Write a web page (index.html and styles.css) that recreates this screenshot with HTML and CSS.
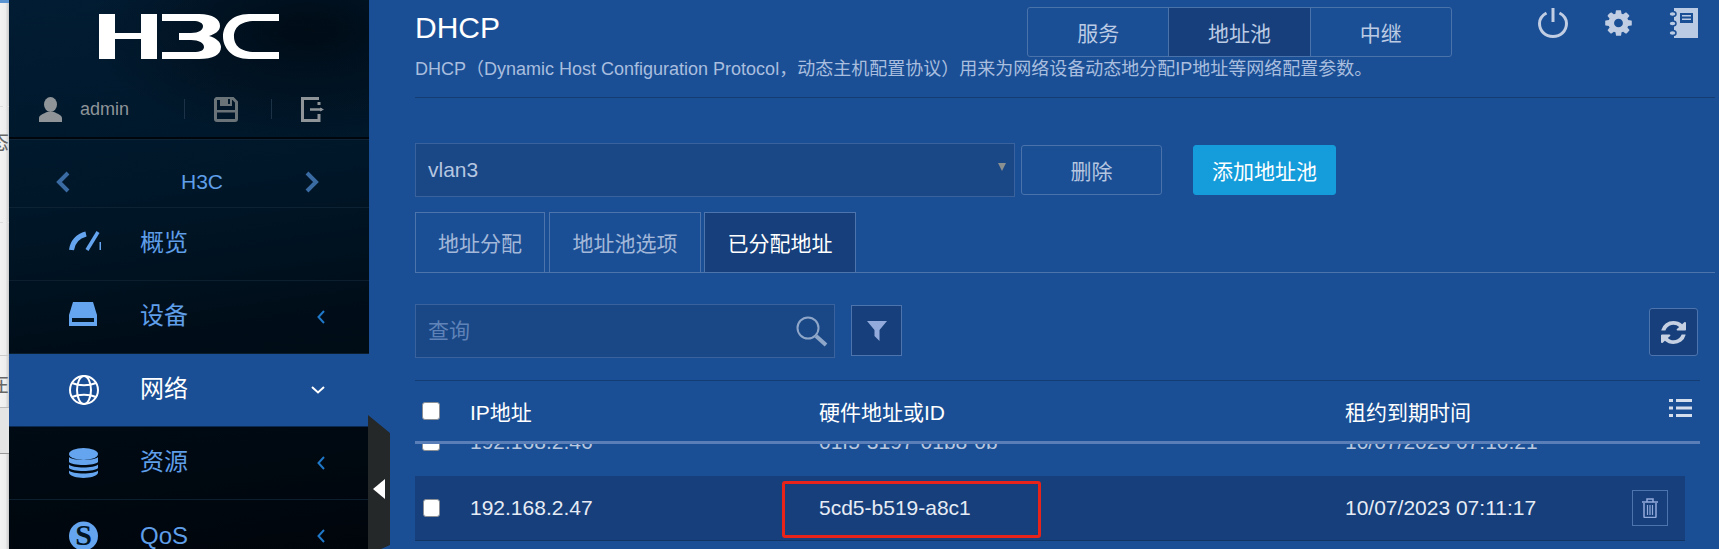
FILE: index.html
```html
<!DOCTYPE html>
<html lang="zh-CN">
<head>
<meta charset="UTF-8">
<meta name="viewport" content="width=device-width, initial-scale=1.0">
<title>DHCP</title>
<link rel="stylesheet" href="styles.css">
</head>
<body>
    <!-- sliver of the window behind -->
    <div class="edge">
        <div class="edge-row edge-a"></div>
        <div class="edge-row edge-b"></div>
        <div class="edge-row edge-c"><span>态</span></div>
        <div class="edge-row edge-d"></div>
        <div class="edge-row edge-e"><span>在</span></div>
        <div class="edge-row edge-f"></div>
        <div class="edge-row edge-g"></div>
    </div>

    <aside class="sidebar">
        <div class="logo">
            <svg width="180" height="45" viewBox="0 0 180 45" fill="#fff" role="img" aria-label="H3C">
                <path d="M0 0H16V19H42V0H58V45H42V25H16V45H0Z"/>
                <path d="M63 0H100C114 0 121 5 121 12C121 17 116 20 110 22C117 24 122 28 122 33C122 41 114 45 100 45H63V38H94C102 38 105 36 105 33C105 29 100 26 92 26H80V19H92C100 19 104 16 104 12C104 9 100 7 94 7H63Z"/>
                <path d="M180 0V7H156C141 7 135 14 135 22.500C135 31 141 38 156 38H180V45H150C132 45 124 33 124 22.500C124 12 132 0 150 0Z"/>
            </svg>
        </div>
        <div class="user-bar">
            <svg class="user-icon" width="23" height="25" viewBox="0 0 23 25" fill="#8e9498">
                <ellipse cx="11.5" cy="7.5" rx="6.5" ry="7.5"/>
                <path d="M0 25V21C0 18 5 16.500 8 15H15C18 16.500 23 18 23 21V25Z"/>
            </svg>
            <span class="user-name">admin</span>
            <span class="user-sep sep-a"></span>
            <svg class="save-icon" width="24" height="25" viewBox="0 0 24 25">
                <path d="M2.500 1.500H19L22.500 5V22C22.500 23 22 23.500 21 23.500H3C2 23.500 1.500 23 1.500 22V2.500Z" fill="none" stroke="#6a7378" stroke-width="3"/>
                <rect x="6" y="1" width="12" height="8" fill="#6a7378"/>
                <rect x="14" y="2" width="2" height="5" fill="#03192c"/>
                <rect x="2" y="13" width="20" height="2.500" fill="#6a7378"/>
            </svg>
            <span class="user-sep sep-b"></span>
            <svg class="exit-icon" width="24" height="25" viewBox="0 0 24 25" fill="none" stroke="#8e9498" stroke-width="3">
                <path d="M18 1.500H1.500V23.500H18V17"/>
                <path d="M18 8V5"/>
                <path d="M9 12.500H21" stroke-width="2.500"/>
                <path d="M19 10.500L23 12.500L19 14.500Z" fill="#8e9498" stroke="none"/>
            </svg>
        </div>
        <div class="device-bar">
            <svg width="14" height="22" viewBox="0 0 14 22" fill="none" stroke="#3a6ba3" stroke-width="4"><path d="M12 2L3 11L12 20"/></svg>
            <span>H3C</span>
            <svg width="14" height="22" viewBox="0 0 14 22" fill="none" stroke="#3a6ba3" stroke-width="4"><path d="M2 2L11 11L2 20"/></svg>
        </div>
        <nav>
            <a class="nav-row">
                <svg class="nav-icon icon-up" width="32" height="22" viewBox="0 0 32 22" fill="none" stroke="#65a5f0">
                    <path d="M2.500 20C3.500 12 9 6 17 4" stroke-width="5"/>
                    <path d="M18 20L29 2" stroke-width="3.500"/>
                    <path d="M31.500 12V20" stroke-width="2"/>
                </svg>
                <span class="nav-text">概览</span>
            </a>
            <a class="nav-row">
                <svg class="nav-icon icon-up" width="28" height="24" viewBox="0 0 28 24">
                    <path d="M4 0H24L28 13V24H0V13Z" fill="#65a5f0"/>
                    <rect x="3" y="16" width="22" height="4" fill="#021524"/>
                </svg>
                <span class="nav-text">设备</span>
                <svg class="chev" width="8" height="14" viewBox="0 0 8 14" fill="none" stroke="#1f78c8" stroke-width="2"><path d="M7 1L1.500 7L7 13"/></svg>
            </a>
            <a class="nav-row active">
                <svg class="nav-icon" width="30" height="30" viewBox="0 0 30 30" fill="none" stroke="#fff" stroke-width="2">
                    <circle cx="15" cy="15" r="14"/>
                    <ellipse cx="15" cy="15" rx="7" ry="14"/>
                    <path d="M3 8C10 11 20 11 27 8M3 22C10 19 20 19 27 22"/>
                </svg>
                <span class="nav-text">网络</span>
                <svg class="chev" width="14" height="8" viewBox="0 0 14 8" fill="none" stroke="#fff" stroke-width="2"><path d="M1 1L7 6.500L13 1"/></svg>
            </a>
            <a class="nav-row">
                <svg class="nav-icon" width="29" height="30" viewBox="0 0 29 30" fill="#65a5f0">
                    <ellipse cx="14.500" cy="6" rx="14.500" ry="6"/>
                    <path d="M0 9C3 13 26 13 29 9V14C26 18 3 18 0 14Z"/>
                    <path d="M0 16.500C3 20.500 26 20.500 29 16.500V20C26 24 3 24 0 20Z"/>
                    <path d="M0 22.500C3 26.500 26 26.500 29 22.500V25C26 31.500 3 31.500 0 25Z"/>
                </svg>
                <span class="nav-text">资源</span>
                <svg class="chev" width="8" height="14" viewBox="0 0 8 14" fill="none" stroke="#1f78c8" stroke-width="2"><path d="M7 1L1.500 7L7 13"/></svg>
            </a>
            <a class="nav-row">
                <svg class="nav-icon" width="29" height="30" viewBox="0 0 29 30">
                    <circle cx="14.500" cy="15" r="14.500" fill="#65a5f0"/>
                    <text x="14.500" y="24" text-anchor="middle" class="qos-letter">S</text>
                </svg>
                <span class="nav-text nav-latin">QoS</span>
                <svg class="chev" width="8" height="14" viewBox="0 0 8 14" fill="none" stroke="#1f78c8" stroke-width="2"><path d="M7 1L1.500 7L7 13"/></svg>
            </a>
        </nav>
    </aside>

    <div class="collapse-tab"><span class="collapse-arrow"></span></div>

    <main class="main">
        <div class="head-row">
            <h1 class="title">DHCP</h1>
            <div class="segments">
                <a class="segment">服务</a>
                <a class="segment on">地址池</a>
                <a class="segment">中继</a>
            </div>
            <div class="top-icons">
                <svg width="30" height="30" viewBox="0 0 30 30" fill="none" stroke="#c0cde2" stroke-width="3">
                    <path d="M8.500 5C4 7.500 1.500 11 1.500 15.500C1.500 23 7.500 28.500 15 28.500C22.500 28.500 28.500 23 28.500 15.500C28.500 11 26 7.500 21.500 5"/>
                    <path d="M15 0V14"/>
                </svg>
                <svg width="31" height="30" viewBox="0 0 1792 1792" preserveAspectRatio="none" fill="#c0cde2">
                    <path d="M1152 896q0-106-75-181t-181-75-181 75-75 181 75 181 181 75 181-75 75-181zm512-109v222q0 12-8 23t-20 13l-185 28q-19 54-39 91 35 50 107 138 10 12 10 25t-9 23q-27 37-99 108t-94 71q-12 0-26-9l-138-108q-44 23-91 38-16 136-29 186-7 28-36 28h-222q-14 0-24.500-8.500t-11.500-21.500l-28-184q-49-16-90-37l-141 107q-10 9-25 9-14 0-25-11-126-114-165-168-7-10-7-23 0-12 8-23 15-21 51-66.500t54-70.500q-27-50-41-99l-183-27q-13-2-21-12.500t-8-23.500v-222q0-12 8-23t19-13l186-28q14-46 39-92-40-57-107-138-10-12-10-24 0-10 9-23 26-36 98.500-107.500t94.500-71.500q13 0 26 10l138 107q44-23 91-38 16-136 29-186 7-28 36-28h222q14 0 24.500 8.500t11.500 21.500l28 184q49 16 90 37l142-107q9-9 24-9 13 0 25 10 129 119 165 170 7 8 7 22 0 12-8 23-15 21-51 66.500t-54 70.500q26 50 41 98l183 28q13 2 21 12.500t8 23.500z"/>
                </svg>
                <svg width="29" height="30" viewBox="0 0 29 30">
                    <rect x="5" y="0" width="24" height="30" fill="#bccbe4"/>
                    <rect x="11" y="5" width="13" height="10" fill="#1b4f95"/>
                    <rect x="13" y="7" width="9" height="1.500" fill="#bccbe4"/>
                    <rect x="13" y="10.500" width="9" height="1.500" fill="#bccbe4"/>
                    <g fill="#bccbe4" stroke="#1b4f95" stroke-width="1.500">
                        <ellipse cx="3.500" cy="6" rx="3.500" ry="2.500"/>
                        <ellipse cx="3.500" cy="15.500" rx="3.500" ry="2.500"/>
                        <ellipse cx="3.500" cy="25" rx="3.500" ry="2.500"/>
                    </g>
                </svg>
            </div>
        </div>
        <p class="desc">DHCP（Dynamic Host Configuration Protocol，动态主机配置协议）用来为网络设备动态地分配IP地址等网络配置参数。</p>

        <div class="pool-row">
            <div class="select">vlan3<span class="select-arrow"></span></div>
            <button type="button" class="btn">删除</button>
            <button type="button" class="btn btn-add">添加地址池</button>
        </div>

        <div class="tabs">
            <a class="tab tab-a">地址分配</a>
            <a class="tab tab-b">地址池选项</a>
            <a class="tab tab-c on">已分配地址</a>
        </div>

        <div class="toolbar">
            <div class="search">
                <span class="search-text">查询</span>
                <svg width="32" height="31" viewBox="0 0 32 31" fill="none" stroke="#8ea6c8">
                    <circle cx="12" cy="12" r="10.500" stroke-width="2"/>
                    <path d="M20 20L30 29" stroke-width="4"/>
                </svg>
            </div>
            <button type="button" class="tool-btn filter-btn">
                <svg width="20" height="20" viewBox="0 0 20 20" fill="#93abdc"><path d="M0 0H20L12.500 9V20L7.500 15V9Z"/></svg>
            </button>
            <button type="button" class="tool-btn refresh-btn">
                <svg width="25" height="23" viewBox="0 0 1536 1536" preserveAspectRatio="none" fill="#c5d0e2">
                    <path d="M1511 928q0 5-1 7-64 268-268 434.500t-478 166.500q-146 0-282.500-55t-243.500-157l-129 129q-19 19-45 19t-45-19-19-45v-448q0-26 19-45t45-19h448q26 0 45 19t19 45-19 45l-137 137q71 66 161 102t187 36q134 0 250-65t186-179q11-17 53-117 8-23 30-23h192q13 0 22.500 9.500t9.500 22.500zm25-800v448q0 26-19 45t-45 19h-448q-26 0-45-19t-19-45 19-45l138-138q-148-137-349-137-134 0-250 65t-186 179q-11 17-53 117-8 23-30 23h-199q-13 0-22.500-9.500t-9.500-22.500v-7q65-268 270-434.500t480-166.500q146 0 284 55.500t245 156.500l130-129q19-19 45-19t45 19 19 45z"/>
                </svg>
            </button>
        </div>

        <div class="table-head">
            <div class="cell-check"><input type="checkbox" class="check check-head"></div>
            <div class="cell-ip">IP地址</div>
            <div class="cell-hw">硬件地址或ID</div>
            <div class="cell-time">租约到期时间</div>
            <svg class="list-icon" width="23" height="18" viewBox="0 0 23 18" fill="#d5deec">
                <rect x="0" y="0" width="4" height="3"/><rect x="7" y="0" width="16" height="3"/>
                <rect x="0" y="7.500" width="4" height="3"/><rect x="7" y="7.500" width="16" height="3"/>
                <rect x="0" y="15" width="4" height="3"/><rect x="7" y="15" width="16" height="3"/>
            </svg>
        </div>

        <div class="table-body">
            <div class="row row-scrolled">
                <div class="cell-check"><input type="checkbox" class="check"></div>
                <div class="cell-ip">192.168.2.46</div>
                <div class="cell-hw">01f5-3197-01b8-0b</div>
                <div class="cell-time">10/07/2023 07:10:21</div>
            </div>
            <div class="row row-selected">
                <div class="cell-check"><input type="checkbox" class="check"></div>
                <div class="cell-ip">192.168.2.47</div>
                <div class="cell-hw">5cd5-b519-a8c1</div>
                <div class="cell-time">10/07/2023 07:11:17</div>
                <button type="button" class="trash-btn">
                    <svg width="16" height="20" viewBox="0 0 16 20" fill="none" stroke="#93abdc">
                        <path d="M0 4H16M5 3.500V1H11V3.500" stroke-width="1.500"/>
                        <path d="M2 5V18.500C2 19 2.500 19.500 3 19.500H13C13.500 19.500 14 19 14 18.500V5" stroke-width="1.500"/>
                        <path d="M5.500 7V17M8 7V17M10.500 7V17" stroke-width="1.200"/>
                    </svg>
                </button>
                <span class="mark"></span>
            </div>
        </div>
    </main>
</body>
</html>
```

FILE: styles.css
```css
* {
    box-sizing: border-box;
}
html, body {
    height: 549px;
    overflow: hidden;
}
body {
    margin: 0;
    display: flex;
    position: relative;
    background-color: #1b4f95;
    font-family: "Liberation Sans", "Noto Sans CJK SC", sans-serif;
    font-size: 21px;
    color: #fff;
}

/* window behind */
.edge {
    width: 9px;
    flex: none;
    overflow: hidden;
    background: linear-gradient(90deg, #f2f2f2, #eeeeee 60%, #c9c9c9);
    color: #666;
    font-size: 21px;
}
.edge-row {
    display: flex;
    justify-content: flex-end;
    align-items: center;
    white-space: nowrap;
}
.edge-row span {
    flex: none;
}
.edge-a {
    height: 3px;
    background-color: #5b94d0;
}
.edge-b {
    height: 104px;
    border-bottom: 1px dashed #ddd;
}
.edge-c {
    height: 116px;
    padding-top: 18px;
    border-bottom: 1px dashed #ddd;
    align-items: flex-start;
}
.edge-d {
    height: 133px;
    border-bottom: 1px solid #ccc;
}
.edge-e {
    height: 52px;
    border-bottom: 1px solid #bbb;
}
.edge-f {
    height: 46px;
    background-color: #e4e4e4;
    border-bottom: 1px solid #999;
}
.edge-g {
    height: 95px;
}

/* sidebar */
.sidebar {
    width: 360px;
    flex: none;
    overflow: hidden;
    background:
        radial-gradient(ellipse 220px 110px at 300px 30px, rgba(0, 8, 16, 0.8), transparent),
        linear-gradient(172deg, #021c33 0, #001729 35%, #000d18 60%, #00050b 100%);
}
.logo {
    height: 91px;
    padding: 14px 0 0 90px;
}
.user-bar {
    height: 48px;
    display: flex;
    align-items: center;
    padding-left: 30px;
    border-bottom: 2px solid #00060c;
    box-shadow: 0 1px 0 #0d2436;
    padding-bottom: 10px;
}
.user-name {
    margin-left: 18px;
    font-size: 18px;
    color: #8e9498;
}
.user-sep {
    width: 1px;
    height: 20px;
    background-color: #1c3347;
}
.sep-a {
    margin-left: 55px;
}
.save-icon {
    margin-left: 29px;
}
.sep-b {
    margin-left: 33px;
}
.exit-icon {
    margin-left: 29px;
}
.device-bar {
    height: 68px;
    margin-top: 1px;
    padding: 16px 0 0 47px;
    display: flex;
    align-items: center;
    border-bottom: 1px solid #0d2232;
    font-size: 21px;
    color: #5f9ee8;
}
.device-bar span {
    margin: 0 82px 0 111px;
}
.nav-row {
    height: 73px;
    padding: 0 44px 0 60px;
    display: grid;
    grid-template-columns: 71px 1fr auto;
    align-items: center;
    border-bottom: 1px solid #0b1f2e;
    font-size: 24px;
    color: #5f9ee8;
}
.nav-row.active {
    background-color: #1b4f95;
    color: #fff;
    border-bottom-color: #0a2a52;
}
.icon-up {
    margin-bottom: 6px;
}
.nav-text {
    padding-bottom: 7px;
}
.nav-latin {
    padding-bottom: 0;
}
.qos-letter {
    font-family: "Liberation Serif", serif;
    font-weight: bold;
    font-size: 30px;
    fill: #021524;
}

/* the tab that folds the sidebar */
.collapse-tab {
    position: absolute;
    left: 368px;
    top: 415px;
    width: 22px;
    height: 140px;
    background-color: #252829;
    clip-path: polygon(0 0, 100% 18px, 100% 130px, 0 140px);
}
.collapse-arrow {
    position: absolute;
    left: 5px;
    top: 64px;
    width: 0;
    height: 0;
    border-style: solid;
    border-width: 10px 12px 10px 0;
    border-color: transparent #fff transparent transparent;
}

/* main */
.main {
    flex: 1;
    min-width: 0;
    padding: 7px 4px 0 46px;
}
.head-row {
    height: 50px;
    display: flex;
}
.title {
    width: 612px;
    margin: 0;
    font-size: 30px;
    font-weight: normal;
    line-height: 42px;
}
.segments {
    width: 425px;
    height: 50px;
    display: flex;
    border: 1px solid #4a72ab;
    border-radius: 3px;
}
.segment {
    flex: 1;
    display: flex;
    align-items: center;
    justify-content: center;
    color: #bccbe4;
    border-right: 1px solid #4a72ab;
}
.segment:last-child {
    border-right: none;
}
.segment.on {
    background-color: #163f7b;
}
.top-icons {
    display: flex;
    gap: 35px;
    margin-left: 86px;
    height: 30px;
    margin-top: 1px;
}
.desc {
    margin: 0;
    height: 41px;
    border-bottom: 1px solid #143e73;
    font-size: 18px;
    line-height: 24px;
    color: #a9bedf;
    white-space: nowrap;
}
.pool-row {
    margin-top: 45px;
    display: flex;
    align-items: center;
}
.select {
    width: 600px;
    height: 54px;
    position: relative;
    display: flex;
    align-items: center;
    padding-left: 12px;
    background-color: #1a4786;
    border: 1px solid #3a629c;
    color: #b5c6e0;
}
.select-arrow {
    position: absolute;
    right: 8px;
    top: 19px;
    width: 0;
    height: 0;
    border-style: solid;
    border-width: 8px 4.5px 0 4.5px;
    border-color: #8a8f8f transparent transparent transparent;
}
.btn {
    width: 141px;
    height: 50px;
    margin-left: 6px;
    padding: 0;
    background: none;
    border: 1px solid #4a72ab;
    border-radius: 3px;
    font: inherit;
    color: #b5c6e0;
}
.btn-add {
    width: 143px;
    margin-left: 31px;
    background-color: #149cdb;
    border-color: #149cdb;
    color: #fff;
}
.tabs {
    height: 61px;
    margin-top: 15px;
    display: flex;
    border-bottom: 1px solid #4d74ac;
}
.tab {
    height: 61px;
    display: flex;
    align-items: center;
    justify-content: center;
    padding-bottom: 2px;
    border: 1px solid #4d74ac;
    color: #a3b8d9;
}
.tab-a {
    width: 130px;
}
.tab-b {
    width: 152px;
    margin-left: 4px;
}
.tab-c {
    width: 152px;
    margin-left: 3px;
}
.tab.on {
    background-color: #163f7b;
    color: #fff;
}
.toolbar {
    margin-top: 31px;
    margin-right: 17px;
    display: flex;
    align-items: flex-start;
}
.search {
    width: 420px;
    height: 54px;
    display: flex;
    align-items: center;
    justify-content: space-between;
    padding: 0 6px 0 12px;
    background-color: #1a4786;
    border: 1px solid #3a629c;
    color: #5f83b8;
}
.search-text {
    padding-bottom: 4px;
}
.tool-btn {
    display: flex;
    align-items: center;
    justify-content: center;
    padding: 0;
    background-color: #163f7b;
    border: 1px solid #4d74ac;
}
.filter-btn {
    width: 51px;
    height: 51px;
    margin: 1px 0 0 16px;
}
.refresh-btn {
    width: 49px;
    height: 48px;
    margin: 4px 0 0 auto;
    border-radius: 3px;
}

/* table */
.table-head {
    height: 64px;
    margin-top: 22px;
    margin-right: 15px;
    display: flex;
    align-items: center;
    position: relative;
    border-top: 1px solid #143e73;
    border-bottom: 3px solid #5a7fb8;
}
.table-body {
    height: 105px;
    overflow: hidden;
}
.cell-check {
    width: 55px;
    flex: none;
    display: flex;
    padding-left: 7px;
}
.cell-ip {
    width: 349px;
    flex: none;
}
.cell-hw {
    width: 526px;
    flex: none;
}
.cell-time {
    width: 287px;
    flex: none;
}
.check {
    appearance: none;
    width: 18px;
    height: 18px;
    margin: 0;
    background-color: #fff;
    border: 1px solid #8a8f96;
    border-radius: 3px;
}
.list-icon {
    position: absolute;
    right: 8px;
    top: 18px;
}
.row {
    width: 1270px;
    height: 65px;
    display: flex;
    align-items: center;
    position: relative;
}
.row-scrolled {
    margin-top: -35px;
    margin-bottom: 2px;
    color: #b9c8df;
}
.row-selected {
    background-color: #163f7b;
    border-bottom: 1px solid #123663;
    color: #e6ecf5;
}
.row-selected .cell-check {
    padding-left: 8px;
}
.row-selected .check {
    width: 17px;
}
.trash-btn {
    width: 36px;
    height: 36px;
    display: flex;
    align-items: center;
    justify-content: center;
    padding: 0;
    background: none;
    border: 1px solid #4d74ac;
}
/* red box drawn over the screenshot */
.mark {
    position: absolute;
    left: 367px;
    top: 5px;
    width: 259px;
    height: 57px;
    border: 3px solid #e8231a;
    border-radius: 3px;
}
```
